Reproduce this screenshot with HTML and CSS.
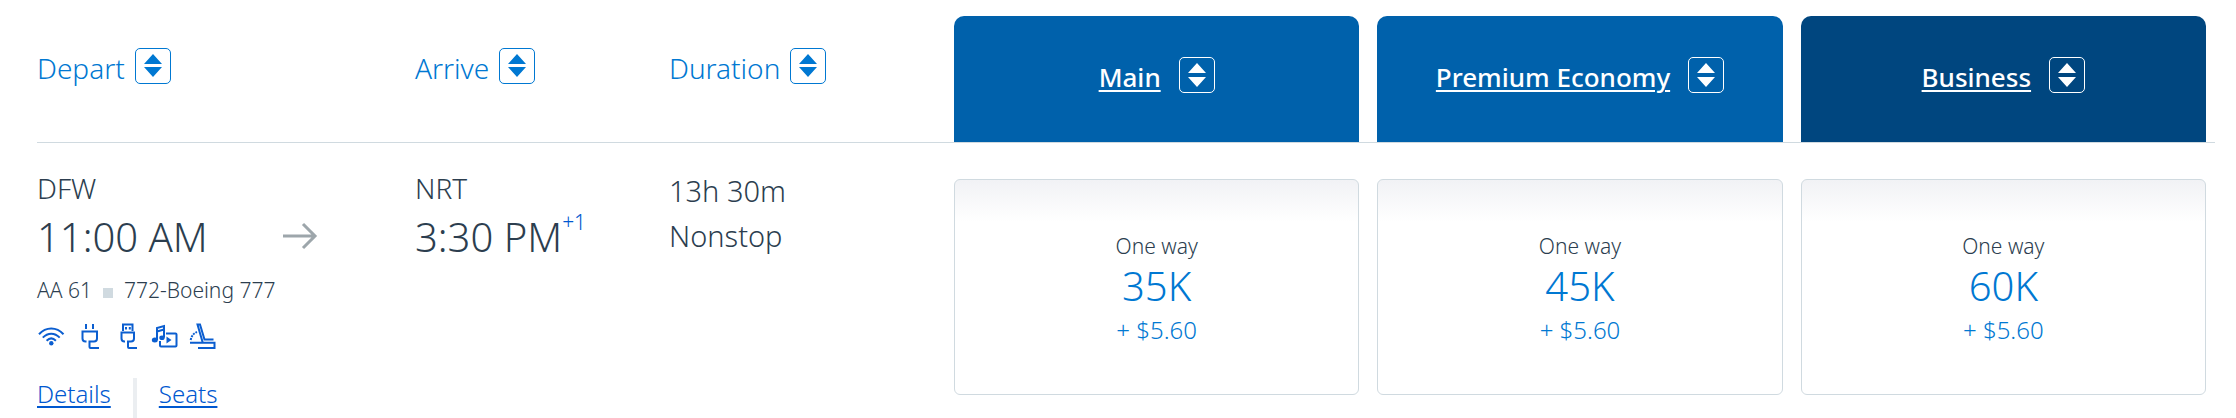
FILE: index.html
```html
<!DOCTYPE html>
<html lang="en">
<head>
    <meta charset="UTF-8">
    <meta name="viewport" content="width=device-width, initial-scale=1.0">
    <title>Choose flights</title>
    <link rel="stylesheet" href="styles.css">
</head>
<body>
    <table class="results">
        <colgroup>
            <col class="col-depart">
            <col class="col-arrive">
            <col class="col-duration">
            <col>
            <col>
            <col>
        </colgroup>
        <thead>
            <tr>
                <th scope="col">
                    <div class="heading">
                        <span class="label">Depart</span>
                        <button type="button" class="sort" aria-label="Sort by departure">
                            <svg viewBox="0 0 18 24"><path d="M9 0l9 10H0zM0 13h18l-9 10z"/></svg>
                        </button>
                    </div>
                </th>
                <th scope="col">
                    <div class="heading">
                        <span class="label">Arrive</span>
                        <button type="button" class="sort" aria-label="Sort by arrival">
                            <svg viewBox="0 0 18 24"><path d="M9 0l9 10H0zM0 13h18l-9 10z"/></svg>
                        </button>
                    </div>
                </th>
                <th scope="col">
                    <div class="heading">
                        <span class="label">Duration</span>
                        <button type="button" class="sort" aria-label="Sort by duration">
                            <svg viewBox="0 0 18 24"><path d="M9 0l9 10H0zM0 13h18l-9 10z"/></svg>
                        </button>
                    </div>
                </th>
                <th scope="col" class="cabin">
                    <div class="tab">
                        <a href="#" class="label">Main</a>
                        <button type="button" class="sort" aria-label="Sort by Main price">
                            <svg viewBox="0 0 18 24"><path d="M9 0l9 10H0zM0 14h18l-9 10z"/></svg>
                        </button>
                    </div>
                </th>
                <th scope="col" class="cabin">
                    <div class="tab">
                        <a href="#" class="label">Premium Economy</a>
                        <button type="button" class="sort" aria-label="Sort by Premium Economy price">
                            <svg viewBox="0 0 18 24"><path d="M9 0l9 10H0zM0 14h18l-9 10z"/></svg>
                        </button>
                    </div>
                </th>
                <th scope="col" class="cabin">
                    <div class="tab tab-business">
                        <a href="#" class="label">Business</a>
                        <button type="button" class="sort" aria-label="Sort by Business price">
                            <svg viewBox="0 0 18 24"><path d="M9 0l9 10H0zM0 14h18l-9 10z"/></svg>
                        </button>
                    </div>
                </th>
            </tr>
        </thead>
        <tbody>
            <tr>
                <td>
                    <div class="airport">DFW</div>
                    <div class="time-row">
                        <span class="time">11:00 AM</span>
                        <svg class="arrow" viewBox="0 0 34 26"><path d="M0 12h32M20 0l12 12-12 12"/></svg>
                    </div>
                    <div class="flight">
                        <span>AA 61</span>
                        <span class="square"></span>
                        <span>772-Boeing 777</span>
                    </div>
                    <div class="amenities">
                        <!-- Wi-Fi -->
                        <svg viewBox="0 0 28 28">
                            <path d="M2 12.3c7-7.6 17.5-7.6 24.5 0M5.8 15.6c5-5.3 11.9-5.3 16.9 0M9.6 18.7c3-3 6.3-3 9.3 0"/>
                            <circle class="fill" cx="14.3" cy="21.3" r="2.2"/>
                        </svg>
                        <!-- Power -->
                        <svg viewBox="0 0 28 28">
                            <path d="M11 2v5M18 2v5M11.5 19.5h-1a3 3 0 0 1-3-3v-7H22v7a3 3 0 0 1-3 3h-4.5V25a1 1 0 0 0 1 1H24"/>
                        </svg>
                        <!-- USB -->
                        <svg viewBox="0 0 28 28">
                            <path d="M10 9V2.5h9.5V9M12 19.5h-.5a3 3 0 0 1-3-3v-6H21v6a3 3 0 0 1-3 3h-3V25a1 1 0 0 0 1 1h8"/>
                            <path class="fill" d="M12 5h2v2.5h-2zM15.8 5h2v2.5h-2z"/>
                        </svg>
                        <!-- Entertainment -->
                        <svg viewBox="0 0 28 28">
                            <path d="M6 18V6l7-2v11.5M6 9.5l7-2M15 11.5h9.5a1 1 0 0 1 1 1v11a1 1 0 0 1-1 1H10a1 1 0 0 1-1-1V19"/>
                            <ellipse class="fill" cx="3.8" cy="18" rx="3" ry="2.5"/>
                            <ellipse class="fill" cx="11" cy="15.7" rx="2.7" ry="2.3"/>
                            <path class="fill" d="M15.5 14.5v7l5-3.5z"/>
                        </svg>
                        <!-- Lie-flat seat -->
                        <svg viewBox="0 0 28 28">
                            <path d="M13.7 20.5L8.5 2.5H11l4.5 15h9M1 20.7h24.5V26H9"/>
                            <path class="dots" d="M1.7 18c.6-3.5 2.5-6.5 6.3-8"/>
                        </svg>
                    </div>
                    <div class="links">
                        <a href="#">Details</a>
                        <span class="divider"></span>
                        <a href="#">Seats</a>
                    </div>
                </td>
                <td>
                    <div class="airport">NRT</div>
                    <div class="time-row">
                        <span class="time">3:30 PM<sup>+1</sup></span>
                    </div>
                </td>
                <td>
                    <div class="duration">13h 30m</div>
                    <div class="duration">Nonstop</div>
                </td>
                <td class="cabin">
                    <button type="button" class="fare">
                        <span class="trip">One way</span>
                        <span class="miles">35K</span>
                        <span class="fee">+ $5.60</span>
                    </button>
                </td>
                <td class="cabin">
                    <button type="button" class="fare">
                        <span class="trip">One way</span>
                        <span class="miles">45K</span>
                        <span class="fee">+ $5.60</span>
                    </button>
                </td>
                <td class="cabin">
                    <button type="button" class="fare">
                        <span class="trip">One way</span>
                        <span class="miles">60K</span>
                        <span class="fee">+ $5.60</span>
                    </button>
                </td>
            </tr>
        </tbody>
    </table>
</body>
</html>
```

FILE: styles.css
```css
/* General */
* {
    box-sizing: border-box;
}

body {
    margin: 0;
    padding: 0 21px 0 37px;
    font-family: 'Noto Sans', 'Open Sans', sans-serif;
    font-weight: 300;
    color: #2c3e4f;
    background: #fff;
}

button {
    font-family: inherit;
    font-weight: inherit;
    cursor: pointer;
}

svg {
    display: block;
}

/* Results table */
.results {
    width: 100%;
    table-layout: fixed;
    border-spacing: 0;
}

.col-depart {
    width: 378px;
}

.col-arrive {
    width: 254px;
}

.col-duration {
    width: 276px;
}

.results th {
    padding: 48px 0 0;
    border-bottom: 1px solid #d0dae0;
    font-weight: 300;
    text-align: left;
    vertical-align: top;
}

.results td {
    padding: 25px 0 0;
    vertical-align: top;
}

.results th.cabin {
    padding: 16px 9px 0;
}

.results td.cabin {
    padding: 36px 9px 0;
}

/* Column headings */
.heading {
    display: flex;
    align-items: flex-start;
    gap: 10px;
    color: #0078d2;
}

.label {
    font-size: 28px;
    line-height: 40px;
}

.sort {
    display: flex;
    justify-content: center;
    width: 36px;
    height: 36px;
    padding: 5px 0;
    border: 1px solid currentColor;
    border-radius: 5px;
    background: none;
    color: inherit;
}

.sort svg {
    width: 18px;
    height: 24px;
    fill: currentColor;
}

.tab {
    display: flex;
    justify-content: center;
    align-items: flex-start;
    gap: 18px;
    padding: 41px 0 45px;
    border-radius: 10px 10px 0 0;
    background: #0061ab;
    color: #fff;
}

.tab-business {
    background: #00467f;
}

.tab .label {
    font-size: 26px;
    font-weight: 500;
    color: #fff;
    text-decoration-thickness: 2px;
    text-underline-offset: 3px;
}

/* Flight info */
.airport {
    font-size: 28px;
    line-height: 40px;
}

.time-row {
    display: flex;
    justify-content: space-between;
    align-items: center;
    padding-right: 98px;
}

.time {
    font-size: 40px;
    line-height: 58px;
    white-space: nowrap;
}

.time sup {
    font-size: 21px;
    line-height: 0;
    vertical-align: 22px;
    color: #0058d0;
}

.arrow {
    width: 34px;
    height: 26px;
    fill: none;
    stroke: #9da6ab;
    stroke-width: 3;
    overflow: visible;
}

.flight {
    display: flex;
    align-items: center;
    gap: 11px;
    margin-top: 8px;
    font-size: 21px;
    line-height: 32px;
}

.square {
    width: 10px;
    height: 10px;
    margin-top: 6px;
    background: #d0dae0;
}

.duration {
    font-size: 29px;
    line-height: 45px;
}

.amenities {
    display: flex;
    gap: 10px;
    margin-top: 16px;
}

.amenities svg {
    width: 28px;
    height: 28px;
    fill: none;
    stroke: #0b5ed0;
    stroke-width: 2;
}

.amenities .fill {
    fill: #0b5ed0;
    stroke: none;
}

.amenities .dots {
    stroke-dasharray: 2 1;
}

.links {
    display: flex;
    gap: 22px;
    margin-top: 28px;
}

.links a {
    font-size: 24px;
    line-height: 32px;
    color: #0058d0;
    text-decoration-thickness: 2px;
    text-underline-offset: 3px;
}

.divider {
    width: 4px;
    height: 40px;
    background: #ebeef1;
}

/* Fare cards */
.fare {
    display: flex;
    flex-direction: column;
    align-items: center;
    width: 100%;
    padding: 52px 0 46px;
    border: 1px solid #d0dae0;
    border-radius: 6px;
    background: linear-gradient(#f1f2f5, #fff 42px);
    color: #0078d2;
}

.trip {
    font-size: 21px;
    line-height: 28px;
    color: #2c3e4f;
}

.miles {
    font-size: 40px;
    line-height: 52px;
}

.fee {
    font-size: 24px;
    line-height: 36px;
}
```
